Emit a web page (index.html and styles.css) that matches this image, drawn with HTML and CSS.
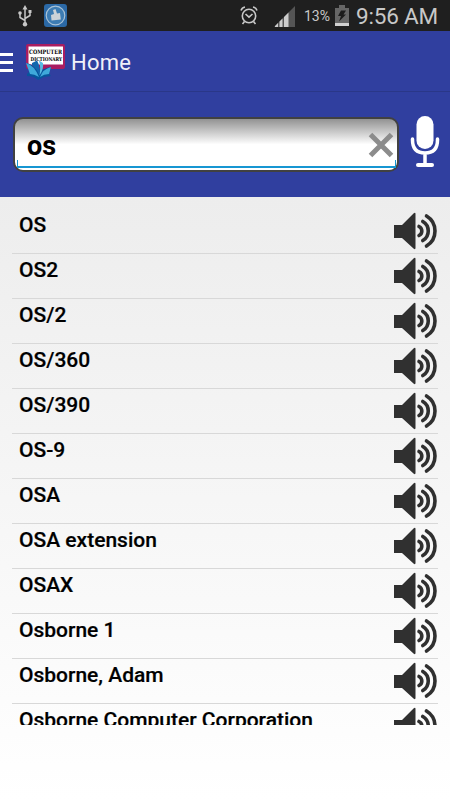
FILE: index.html
```html
<!DOCTYPE html>
<html lang="en">
<head>
    <meta charset="UTF-8">
    <meta name="viewport" content="width=device-width, initial-scale=1.0">
    <title>Computer Dictionary</title>
    <link rel="stylesheet" href="styles.css">
</head>
<body>
    <svg class="sprite">
        <symbol id="speaker" viewBox="0 0 44 38">
            <path d="M0 13h8L19.500 1.500Q21.500 0 21.500 2v34q0 2-2 .5L8 26H0z" fill="#303030"/>
            <path d="M25 14.500a5 5 0 0 1 0 9M28.800 9.500a11 11 0 0 1 0 19M32.500 4a17.500 17.500 0 0 1 0 30" fill="none" stroke="#303030" stroke-width="3.600" stroke-linecap="round"/>
        </symbol>
    </svg>

    <div class="status-bar">
        <svg class="usb" width="14" height="22" viewBox="0 0 14 22" fill="none" stroke="#c8c8c8" stroke-width="1.500">
            <path d="M7 3v17M7 15.500L2 12.500V8M7 13.500l5-3V7"/>
            <path d="M4.500 4.500L7 0l2.500 4.500zM10.500 5h3v3h-3z" fill="#c8c8c8" stroke="none"/>
            <circle cx="2" cy="8" r="1.800" fill="#c8c8c8" stroke="none"/>
            <circle cx="7" cy="19.300" r="2.200" fill="#c8c8c8" stroke="none"/>
        </svg>
        <svg class="cleaner" width="23" height="23" viewBox="0 0 23 23">
            <rect width="23" height="23" rx="3" fill="#2b69a6"/>
            <circle cx="11.500" cy="11.500" r="9.300" fill="#3d7cb3" stroke="#a9c2d6" stroke-width="1.200"/>
            <path d="M9 6l2.500-1 1.500 4.500 3-.5.800 6.500-9.300 1-.5-5.500 3-1z" fill="#cbd2d8"/>
        </svg>
        <svg class="alarm" width="18" height="19" viewBox="0 0 18 19" fill="none" stroke="#c8c8c8" stroke-width="1.600">
            <circle cx="9" cy="10" r="6.700"/>
            <path d="M5.500 8l3.500 3.200L12.500 8M1 4.500q1-3 4-3.500M17 4.500q-1-3-4-3.500M4.500 15.500L2.500 18M13.500 15.500l2 2.500"/>
        </svg>
        <svg class="signal" width="21" height="21" viewBox="0 0 21 21">
            <path d="M0 21L21 0v21z" fill="#555"/>
            <path d="M1 20l3-3v4H1zM5.500 15.500l3-3V21h-3zM10 11l4.500-4.500V21H10z" fill="#ccc"/>
        </svg>
        <span class="percent">13%</span>
        <svg class="battery" width="14" height="21" viewBox="0 0 14 21">
            <path d="M4 0h6v3h4v18H0V3h4z" fill="#666"/>
            <path d="M0 18h14v3H0z" fill="#d0d0d0"/>
            <path d="M6 5.500h5L8.500 9.500H11L4 16.500l2-5.500H3z" fill="#1c1c1c"/>
        </svg>
        <span class="clock">9:56 AM</span>
    </div>

    <div class="header">
        <div class="menu"><span></span><span></span><span></span></div>
        <svg class="logo" width="40" height="40" viewBox="0 0 40 40">
            <rect x="0" y="1" width="39" height="25" rx="2" fill="#a91d61"/>
            <rect x="2.500" y="3.500" width="34.500" height="18" fill="#fff"/>
            <text x="3" y="11" textLength="33" lengthAdjust="spacingAndGlyphs" class="logo-text">COMPUTER</text>
            <text x="4.500" y="17.500" textLength="31.500" lengthAdjust="spacingAndGlyphs" class="logo-text small">DICTIONARY</text>
            <path d="M1 31l3-3-4-8q8 1 13 10 5-5 12-6l-2 7 2 2-7 1-6 3q-4-4-11-4z" fill="#07559c"/>
            <path d="M0 20q8 2 13 14-5-3-9-3zM14 34q3-8 11-10l-2 7q-5 0-9 3z" fill="#3fa9da"/>
            <path d="M6 20l5-2.500q4 7 2.500 15Q11 26 6 22z" fill="#1268ae"/>
            <path d="M13 17.500l4 2.500q1 6-3.500 12.500Q15 24 13 17.500z" fill="#58bbe3"/>
        </svg>
        <h1>Home</h1>
    </div>

    <div class="search">
        <div class="search-box">
            <span class="search-text">os</span>
            <svg class="clear" width="26" height="26" viewBox="0 0 26 26">
                <path d="M2.500 2.500l21 21M23.500 2.500l-21 21" stroke="#8c8c8c" stroke-width="5"/>
            </svg>
        </div>
        <svg class="mic" width="30" height="52" viewBox="0 0 30 52">
            <rect x="6.500" y="0" width="17" height="33" rx="8.500" fill="#fff"/>
            <path d="M2.500 23v1q0 13 12.500 13t12.500-13V23M15 37v12" fill="none" stroke="#fff" stroke-width="3.500" stroke-linecap="round"/>
            <path d="M8 49h14" stroke="#fff" stroke-width="4" stroke-linecap="round"/>
        </svg>
    </div>

    <div class="content">
        <div class="list">
            <div class="row"><span>OS</span><svg class="speaker"><use href="#speaker"/></svg></div>
            <div class="row"><span>OS2</span><svg class="speaker"><use href="#speaker"/></svg></div>
            <div class="row"><span>OS/2</span><svg class="speaker"><use href="#speaker"/></svg></div>
            <div class="row"><span>OS/360</span><svg class="speaker"><use href="#speaker"/></svg></div>
            <div class="row"><span>OS/390</span><svg class="speaker"><use href="#speaker"/></svg></div>
            <div class="row"><span>OS-9</span><svg class="speaker"><use href="#speaker"/></svg></div>
            <div class="row"><span>OSA</span><svg class="speaker"><use href="#speaker"/></svg></div>
            <div class="row"><span>OSA extension</span><svg class="speaker"><use href="#speaker"/></svg></div>
            <div class="row"><span>OSAX</span><svg class="speaker"><use href="#speaker"/></svg></div>
            <div class="row"><span>Osborne 1</span><svg class="speaker"><use href="#speaker"/></svg></div>
            <div class="row"><span>Osborne, Adam</span><svg class="speaker"><use href="#speaker"/></svg></div>
            <div class="row"><span>Osborne Computer Corporation</span><svg class="speaker"><use href="#speaker"/></svg></div>
        </div>
    </div>
</body>
</html>
```

FILE: styles.css
```css
* {
    box-sizing: border-box;
}
body {
    margin: 0;
    height: 800px;
    overflow: hidden;
    display: flex;
    flex-direction: column;
    font-family: Roboto, sans-serif;
    background-color: #fff;
}
svg {
    display: block;
    flex-shrink: 0;
}
.sprite {
    display: none;
}
.status-bar {
    height: 31px;
    flex-shrink: 0;
    display: flex;
    align-items: center;
    padding-left: 18px;
    background-color: #1f1f1f;
    color: #c8c8c8;
    white-space: nowrap;
}
.cleaner {
    margin-left: 12px;
}
.alarm {
    margin-left: 173px;
}
.signal {
    margin-left: 16px;
    margin-top: 2px;
}
.percent {
    width: 27px;
    margin-left: 9px;
    font-size: 14px;
}
.battery {
    margin-left: 4px;
}
.clock {
    margin-left: 7px;
    font-size: 22.5px;
    line-height: 30px;
    letter-spacing: -0.2px;
}
.header {
    height: 61px;
    flex-shrink: 0;
    display: flex;
    align-items: center;
    background-color: #303f9f;
    border-bottom: 1px solid #2a3788;
}
.menu {
    display: flex;
    flex-direction: column;
    gap: 5px;
    width: 13px;
    margin-top: 2px;
}
.menu span {
    height: 3px;
    background-color: #fff;
}
.logo {
    margin-left: 13px;
    margin-top: 4px;
    overflow: visible;
}
.logo-text {
    font-family: "DejaVu Serif", serif;
    font-size: 6px;
    font-weight: bold;
}
.logo-text.small {
    font-size: 5px;
}
.header h1 {
    margin: 2px 0 0 5px;
    font-size: 22px;
    font-weight: normal;
    letter-spacing: 0.2px;
    color: #f0f0f8;
}
.search {
    height: 105px;
    flex-shrink: 0;
    display: flex;
    align-items: center;
    padding: 0 10px 0 13px;
    background-color: #303f9f;
}
.search-box {
    width: 386px;
    height: 55px;
    display: flex;
    align-items: center;
    justify-content: space-between;
    position: relative;
    padding: 0 3px 0 12px;
    border: 2px solid #414141;
    border-radius: 10px;
    background: linear-gradient(#929292, #fff 50%);
}
/* text field underline with its two small ends */
.search-box::after {
    content: "";
    position: absolute;
    left: 2px;
    right: 1px;
    bottom: 2px;
    height: 6px;
    border: solid #1696d2;
    border-width: 0 1px 2px;
}
.search-text {
    margin-top: 3px;
    font-size: 27px;
    font-weight: bold;
    color: #000;
}
.mic {
    margin-left: 11px;
    margin-top: -5px;
}
.content {
    flex: 1;
    padding: 12px 12px 0;
    background: linear-gradient(#ededed, #fff);
}
.list {
    height: 516px;
    overflow: hidden;
}
.row {
    height: 45px;
    display: flex;
    justify-content: space-between;
    padding-left: 7px;
    border-bottom: 1px solid #d8d8d8;
    font-size: 21px;
    line-height: 32px;
    font-weight: 500;
    -webkit-text-stroke: 0.2px #000;
    color: #000;
}
.speaker {
    width: 44px;
    height: 38px;
    margin-top: 3px;
}
```
